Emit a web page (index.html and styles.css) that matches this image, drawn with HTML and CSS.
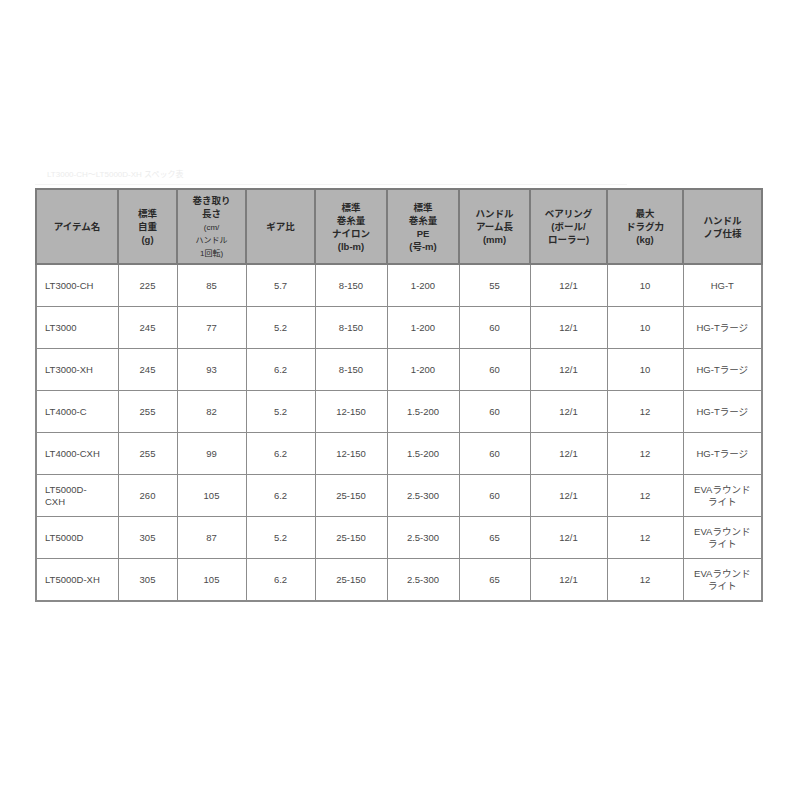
FILE: index.html
```html
<!DOCTYPE html>
<html lang="ja">
<head>
<meta charset="utf-8">
<link rel="stylesheet" href="styles.css">
</head>
<body>
<div class="page">
  <div class="caption">LT3000-CH～LT5000D-XH スペック表</div>
  <table class="spec">
    <colgroup>
      <col class="c1"><col class="c2"><col class="c3"><col class="c4"><col class="c5">
      <col class="c6"><col class="c7"><col class="c8"><col class="c9"><col class="c10">
    </colgroup>
    <thead>
      <tr>
        <th>アイテム名</th>
        <th>標準<br>自重<br>(g)</th>
        <th>巻き取り<br>長さ<br><span class="sm">(cm/<br>ハンドル<br>1回転)</span></th>
        <th>ギア比</th>
        <th>標準<br>巻糸量<br>ナイロン<br>(lb-m)</th>
        <th>標準<br>巻糸量<br>PE<br>(号-m)</th>
        <th>ハンドル<br>アーム長<br>(mm)</th>
        <th>ベアリング<br>(ボール/<br>ローラー)</th>
        <th>最大<br>ドラグ力<br>(kg)</th>
        <th>ハンドル<br>ノブ仕様</th>
      </tr>
    </thead>
    <tbody>
      <tr><td class="name">LT3000-CH</td><td>225</td><td>85</td><td>5.7</td><td>8-150</td><td>1-200</td><td>55</td><td>12/1</td><td>10</td><td>HG-T</td></tr>
      <tr><td class="name">LT3000</td><td>245</td><td>77</td><td>5.2</td><td>8-150</td><td>1-200</td><td>60</td><td>12/1</td><td>10</td><td>HG-Tラージ</td></tr>
      <tr><td class="name">LT3000-XH</td><td>245</td><td>93</td><td>6.2</td><td>8-150</td><td>1-200</td><td>60</td><td>12/1</td><td>10</td><td>HG-Tラージ</td></tr>
      <tr><td class="name">LT4000-C</td><td>255</td><td>82</td><td>5.2</td><td>12-150</td><td>1.5-200</td><td>60</td><td>12/1</td><td>12</td><td>HG-Tラージ</td></tr>
      <tr><td class="name">LT4000-CXH</td><td>255</td><td>99</td><td>6.2</td><td>12-150</td><td>1.5-200</td><td>60</td><td>12/1</td><td>12</td><td>HG-Tラージ</td></tr>
      <tr><td class="name">LT5000D-<br>CXH</td><td>260</td><td>105</td><td>6.2</td><td>25-150</td><td>2.5-300</td><td>60</td><td>12/1</td><td>12</td><td>EVAラウンド<br>ライト</td></tr>
      <tr><td class="name">LT5000D</td><td>305</td><td>87</td><td>5.2</td><td>25-150</td><td>2.5-300</td><td>65</td><td>12/1</td><td>12</td><td>EVAラウンド<br>ライト</td></tr>
      <tr><td class="name">LT5000D-XH</td><td>305</td><td>105</td><td>6.2</td><td>25-150</td><td>2.5-300</td><td>65</td><td>12/1</td><td>12</td><td>EVAラウンド<br>ライト</td></tr>
    </tbody>
  </table>
</div>
</body>
</html>
```

FILE: styles.css
```css
html, body {
  margin: 0;
  padding: 0;
  background: #ffffff;
}

.page {
  padding: 170px 0 0 35px;
  font-family: "Liberation Sans", "Noto Sans CJK JP", sans-serif;
}

.caption {
  font-size: 8px;
  line-height: 10px;
  color: #ececec;
  padding-left: 12px;
  height: 14px;
  border-bottom: 1px solid #f4f4f4;
  width: 580px;
  margin-bottom: 3px;
}

.spec {
  border-collapse: collapse;
  table-layout: fixed;
  width: 726px;
  border: 2px solid #8a8a8a;
}

.c1 { width: 82px; }
.c2 { width: 59px; }
.c3 { width: 69px; }
.c4 { width: 69px; }
.c5 { width: 72px; }
.c6 { width: 72px; }
.c7 { width: 71px; }
.c8 { width: 77px; }
.c9 { width: 76px; }
.c10 { width: 79px; }

.spec th {
  background: #b3b3b3;
  color: #2a2a2a;
  font-size: 9.5px;
  font-weight: bold;
  line-height: 13px;
  height: 73px;
  padding: 0 2px;
  text-align: center;
  vertical-align: middle;
  border: 2px solid #7c7c7c;
}

.spec th .sm {
  font-size: 8px;
  line-height: 11px;
  font-weight: normal;
}

.spec td {
  font-size: 9.5px;
  line-height: 12px;
  color: #4a4a4a;
  height: 41px;
  padding: 0 2px;
  text-align: center;
  vertical-align: middle;
  border: 1px solid #8c8c8c;
}

.spec td.name {
  text-align: left;
  padding-left: 8px;
}
```
